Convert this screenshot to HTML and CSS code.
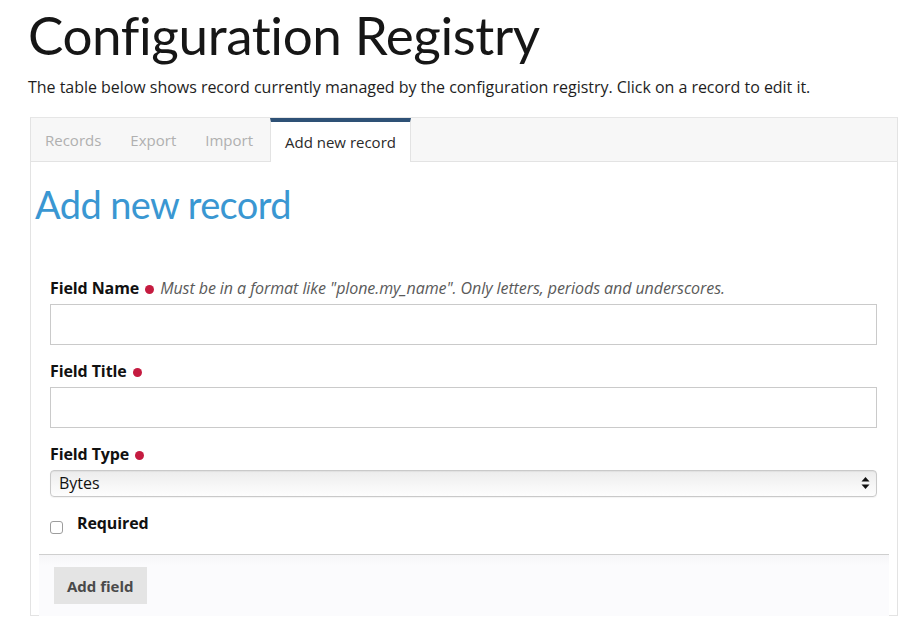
FILE: index.html
```html
<!DOCTYPE html>
<html>
<head>
<meta charset="utf-8">
<title>Configuration Registry</title>
<link rel="stylesheet" href="styles.css">
</head>
<body>
<h1 class="page-title">Configuration Registry</h1>
<p class="lead">The table below shows record currently managed by the configuration registry. Click on a record to edit it.</p>
<div class="panel">
  <nav class="tabs">
    <a class="tab">Records</a>
    <a class="tab">Export</a>
    <a class="tab">Import</a>
    <a class="tab active">Add new record</a>
  </nav>
  <div class="panel-body">
    <h2 class="section-title">Add new record</h2>
    <form class="form">
      <div class="field">
        <div class="label-row"><span class="label">Field Name</span><span class="req"></span><span class="help">Must be in a format like "plone.my_name". Only letters, periods and underscores.</span></div>
        <input class="text-input" type="text">
      </div>
      <div class="field">
        <div class="label-row"><span class="label">Field Title</span><span class="req"></span></div>
        <input class="text-input" type="text">
      </div>
      <div class="field">
        <div class="label-row"><span class="label">Field Type</span><span class="req"></span></div>
        <div class="select-wrap">
          <div class="select">Bytes</div>
          <svg class="select-arrows" width="9" height="14" viewBox="0 0 9 14"><path d="M4.5 1 L8.5 5.5 L0.5 5.5 Z" fill="#111"/><path d="M4.5 13 L8.5 8.5 L0.5 8.5 Z" fill="#111"/></svg>
        </div>
      </div>
      <div class="field check-field">
        <span class="checkbox"></span><span class="label">Required</span>
      </div>
    </form>
    <div class="form-footer">
      <button class="btn" type="button">Add field</button>
    </div>
  </div>
</div>
</body>
</html>
```

FILE: styles.css
```css
html, body {
  margin: 0;
  padding: 0;
  background: #fff;
}
body {
  padding: 3px 21px 0 28px;
  font-family: "Open Sans", "Liberation Sans", sans-serif;
  font-size: 16px;
  color: #222;
}
.page-title {
  margin: 0;
  font-family: "Lato", "Liberation Sans", sans-serif;
  font-weight: 400;
  font-size: 53px;
  line-height: 1.2;
  color: #161616;
  letter-spacing: -0.4px;
}
.lead {
  margin: 8px 0 0 0;
  line-height: 24px;
  color: #1e1e1e;
  letter-spacing: -0.03px;
}
.panel {
  margin: 18px 0 0 2px;
  border: 1px solid #e3e3e3;
  border-top-color: #e6e6e6;
}
.tabs {
  display: flex;
  height: 43px;
  background: #f7f7f7;
  border-bottom: 1px solid #e3e3e3;
  font-size: 15px;
}
.tab {
  display: flex;
  align-items: center;
  padding: 2px 15px 0 14px;
  color: #b0b0b0;
  line-height: 20px;
}
.tab.active {
  color: #2a2a2a;
  background: #fff;
  border-top: 4px solid #2e5176;
  border-left: 1px solid #e3e3e3;
  border-right: 1px solid #e3e3e3;
  margin-bottom: -1px;
  padding: 0 14px 0 14px;
  margin-left: 2px;
}
.panel-body {
  padding: 20px 8px 0 8px;
}
.section-title {
  margin: 0 0 0 -4px;
  font-family: "Lato", "Liberation Sans", sans-serif;
  font-weight: 400;
  font-size: 38px;
  line-height: 45.6px;
  color: #3a97d2;
  letter-spacing: -0.6px;
}
.form {
  padding: 51px 12px 0 11px;
}
.field {
  margin-bottom: 16px;
}
.label-row {
  display: flex;
  align-items: center;
  height: 20px;
  margin-bottom: 6px;
}
.label {
  font-weight: 700;
  color: #111;
  line-height: 20px;
  letter-spacing: -0.1px;
}
.req {
  display: inline-block;
  width: 9px;
  height: 9px;
  border-radius: 50%;
  background: #c51b40;
  margin: 2px 6px 0 6px;
}
.help {
  font-style: italic;
  color: #5a5a5a;
  letter-spacing: -0.07px;
}
.text-input {
  display: block;
  box-sizing: border-box;
  width: 100%;
  height: 41px;
  margin: 0;
  border: 1px solid #cacaca;
  background: #fff;
  outline: none;
}
.select-wrap {
  position: relative;
}
.select {
  box-sizing: border-box;
  height: 27px;
  border: 1px solid #c9c9c9;
  border-radius: 4px;
  background: linear-gradient(#ececec, #f7f7f7 60%, #fdfdfd);
  box-shadow: inset 0 1px 1px rgba(0,0,0,0.05), 0 1px 1px rgba(0,0,0,0.05);
  padding: 0 8px;
  line-height: 25px;
  color: #111;
}
.select-arrows {
  position: absolute;
  right: 7px;
  top: 6px;
}
.check-field {
  display: flex;
  align-items: center;
  margin-bottom: 0;
  height: 20px;
  margin-top: 0;
}
.checkbox {
  display: inline-block;
  box-sizing: border-box;
  width: 13px;
  height: 13px;
  border: 1px solid #9d9d9d;
  border-radius: 3px;
  background: #fff;
  margin: 8px 14px 0 0;
}
.form-footer {
  margin-top: 21px;
  margin-bottom: -1px;
  border-top: 1px solid #cfcfcf;
  background: linear-gradient(#f6f6f8, #fbfbfd 10px);
  padding: 12px 15px 12px 15px;
  position: relative;
}
.btn {
  display: block;
  height: 37px;
  padding: 0 13px;
  border: none;
  background: #e4e4e4;
  font-family: "Open Sans", "Liberation Sans", sans-serif;
  font-size: 15px;
  font-weight: 700;
  color: #4a4a4a;
}
```
